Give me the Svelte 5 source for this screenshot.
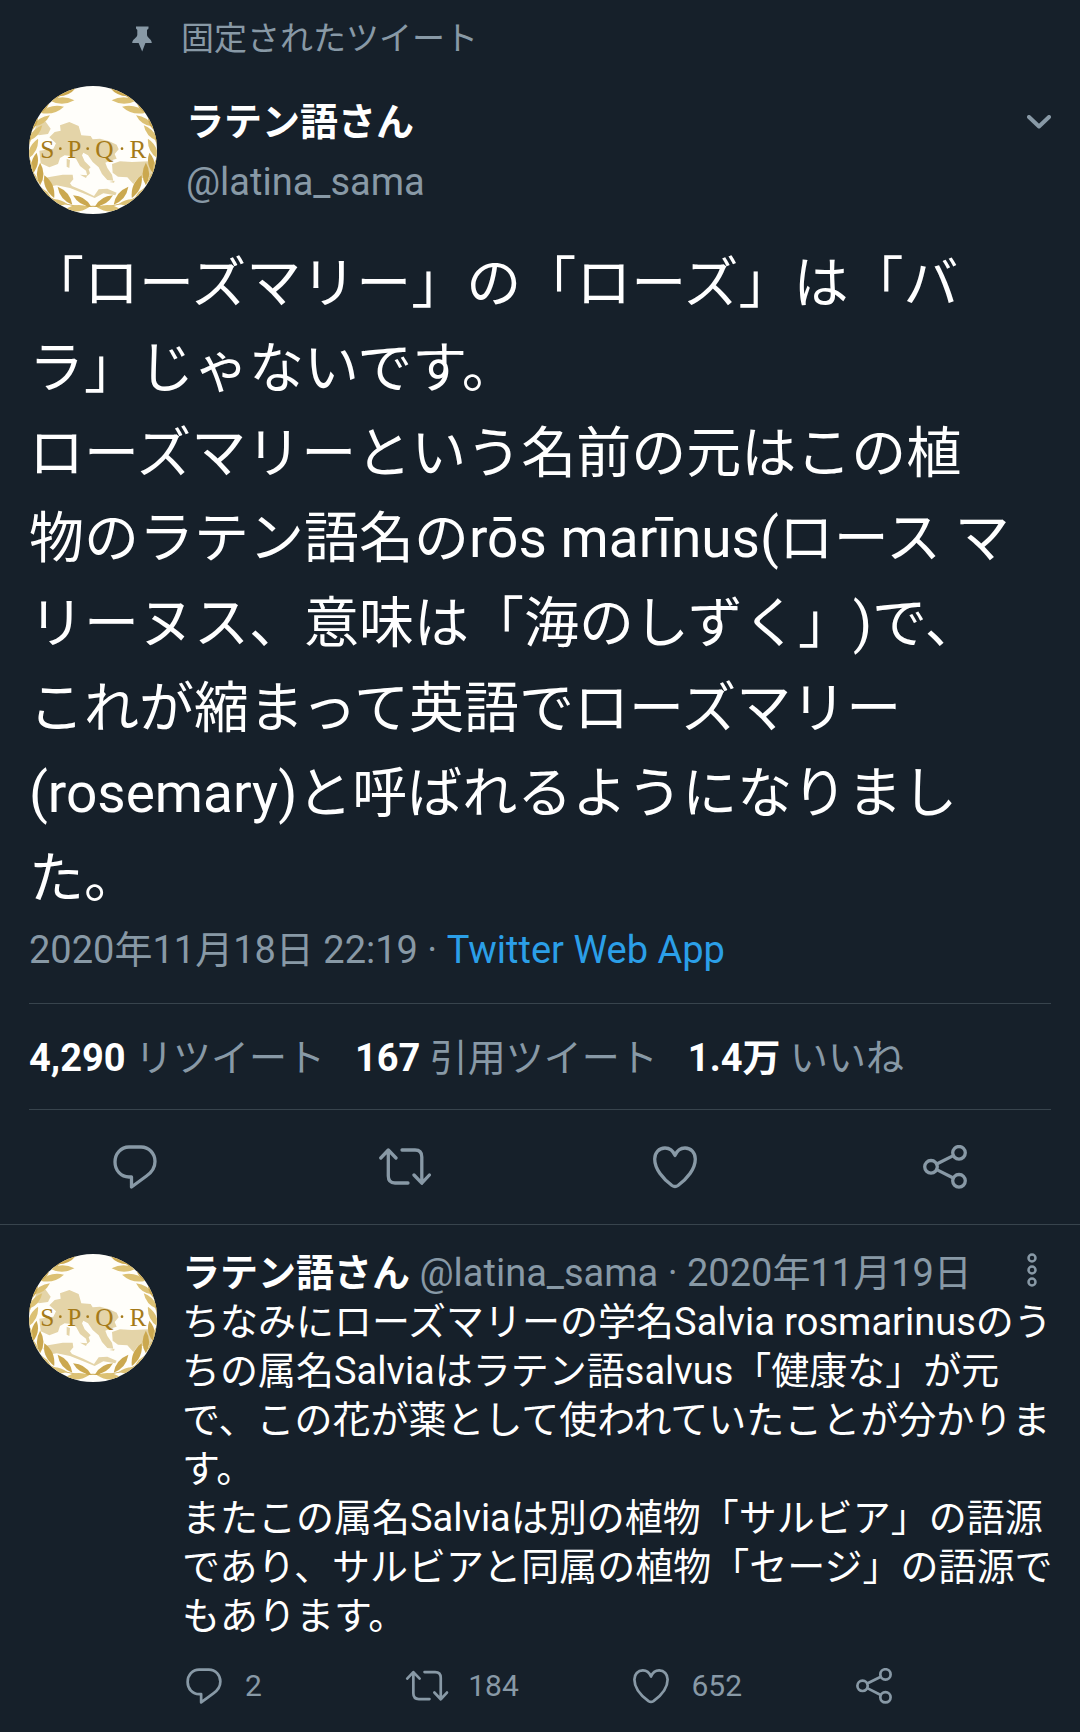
<script lang="ts">
	interface Stat { value: string; label: string }
	interface Action { icon: string; label: string; count?: string }

	const user = { name: 'ラテン語さん', handle: '@latina_sama' };

	const paragraphs = [
		'「ローズマリー」の「ローズ」は「バラ」じゃないです。',
		'ローズマリーという名前の元はこの植物のラテン語名のrōs marīnus(ロース マリーヌス、意味は「海のしずく」)で、これが縮まって英語でローズマリー(rosemary)と呼ばれるようになりました。'
	];

	const replyParagraphs = [
		'ちなみにローズマリーの学名Salvia rosmarinusのうちの属名Salviaはラテン語salvus「健康な」が元で、この花が薬として使われていたことが分かります。',
		'またこの属名Salviaは別の植物「サルビア」の語源であり、サルビアと同属の植物「セージ」の語源でもあります。'
	];

	const stats: Stat[] = [
		{ value: '4,290', label: 'リツイート' },
		{ value: '167', label: '引用ツイート' },
		{ value: '1.4万', label: 'いいね' }
	];

	const actions: Action[] = [
		{ icon: 'reply', label: '返信' },
		{ icon: 'retweet', label: 'リツイート' },
		{ icon: 'like', label: 'いいね' },
		{ icon: 'share', label: '共有' }
	];

	const counts = ['2', '184', '652'];
	const replyActions: Action[] = actions.map((a, i) => ({ ...a, count: counts[i] }));

	// laurel leaves of one branch: base x, base y, tip x, tip y
	const leaves = [
		[112, 48, 170, 24], [96, 62, 166, 61], [92, 60, 138, 32], [68, 98, 136, 80],
		[66, 100, 96, 60], [48, 140, 96, 106], [46, 150, 60, 100], [34, 184, 74, 136],
		[34, 200, 34, 144], [34, 236, 62, 176], [46, 282, 58, 218], [46, 282, 26, 222],
		[68, 316, 68, 248], [64, 318, 30, 262], [108, 354, 80, 286], [98, 350, 44, 316],
		[160, 374, 118, 320], [146, 372, 84, 362], [214, 380, 162, 346], [208, 382, 140, 388]
	];

	function leafPath([x1, y1, x2, y2]: number[]) {
		const mx = (x1 + x2) / 2;
		const my = (y1 + y2) / 2;
		const nx = (y1 - y2) * 0.28;
		const ny = (x2 - x1) * 0.28;
		return `M${x1} ${y1}Q${mx + nx} ${my + ny} ${x2} ${y2}Q${mx - nx} ${my - ny} ${x1} ${y1}Z`;
	}
</script>

{#snippet branch()}
	<path class="stem" d="M44 150C22 210 34 290 76 336C116 374 168 382 219 379" />
	{#each leaves as leaf, i}
		<path d={leafPath(leaf)} class:dark={i % 2 === 0} />
	{/each}
{/snippet}

{#snippet avatar()}
	<a class="avatar" href="#profile" aria-label={user.name}>
		<svg viewBox="27 18 384 384" aria-hidden="true">
			<rect x="27" y="18" width="384" height="384" fill="#fffefa" />
			<g class="map">
				<path d="M52 128L76 124L92 146L84 162L56 166L44 150Z" />
				<path d="M88 172L104 156L122 152L120 136L148 126L176 138L184 166L212 168L218 178L240 176L268 184L290 194L296 208L284 222L290 236L270 242L256 248L262 264L276 284L280 302L262 300L246 282L236 262L218 246L204 226L190 218L186 226L194 244L212 262L206 268L210 280L202 288L198 272L180 258L168 236L152 228L134 226L120 234L114 252L88 262L62 250L58 212L100 206L108 190Z" />
				<path d="M140 236L150 240L148 264L140 260ZM180 284L202 286L198 294ZM268 306L284 302L282 308Z" />
				<path d="M276 252L300 244L336 246L388 244L398 290L352 296L340 312L322 292L294 290L278 278Z" />
				<path d="M70 300L84 292L128 284L158 284L160 298L150 310L156 318L190 332L222 348L236 328L262 326L290 338L286 346L250 340L224 354L186 338L150 324L110 316L76 322Z" />
			</g>
			<g class="laurel" transform="translate(-11 0) scale(1.05 1)">{@render branch()}</g>
			<g class="laurel" transform="translate(449 0) scale(-1.05 1)">{@render branch()}</g>
			<g class="spqr">
				<text x="82" y="233">S</text>
				<text x="163" y="233">P</text>
				<text x="253" y="233">Q</text>
				<text x="354" y="233">R</text>
			</g>
			<g fill="#a57a18">
				<circle cx="121" cy="206" r="4" />
				<circle cx="203" cy="206" r="4" />
				<circle cx="306" cy="206" r="4" />
			</g>
		</svg>
	</a>
{/snippet}

{#snippet icon(name: string)}
	{#if name === 'retweet'}
		<svg class="icon" viewBox="0 0 52 44" aria-hidden="true">
			<path d="M1.8 13L9.3 5L17 13M9.3 5.5V31Q9.3 38 16 38H29" />
			<path d="M23 5H36Q42.8 5 42.8 12V37.5M35 30L42.8 38.2L50.4 30" />
		</svg>
	{:else}
		<svg class="icon" viewBox="-4 0 52 44" aria-hidden="true">
			{#if name === 'reply'}
				<path d="M16 2H28C36 2 42 8.5 42 16.5C42 23 38.5 27.5 33.5 31L18.5 42V32H16C8 32 2 25.5 2 17C2 8.5 8 2 16 2Z" />
			{:else if name === 'like'}
				<path d="M22 10.5C20 5.5 16 3 12 3C6 3 1.7 7.5 1.7 14C1.7 24 10 34 19 40.5Q22 42.5 25 40.5C34 34 42.3 24 42.3 14C42.3 7.5 38 3 32 3C28 3 24 5.5 22 10.5Z" />
			{:else}
				<circle cx="8" cy="21.8" r="6.3" />
				<circle cx="36" cy="7.8" r="6.3" />
				<circle cx="36" cy="35.8" r="6.3" />
				<path d="M13.7 19L30.3 10.6M13.7 24.6L30.3 33" />
			{/if}
		</svg>
	{/if}
{/snippet}

<main>
	<article class="tweet">
		<div class="pinned">
			<svg class="pin" viewBox="0 0 20 26" aria-hidden="true">
				<path d="M4 .5H16.5V2.5L15 4V9C15.3 12 19.8 13 19.8 17H13.4L10.2 25.5L6.6 17H.2C.2 13 5 12 5.3 9V4L4 2.5Z" />
			</svg>
			<span>固定されたツイート</span>
		</div>

		<header class="author">
			{@render avatar()}
			<div class="who">
				<strong>{user.name}</strong>
				<span class="muted">{user.handle}</span>
			</div>
			<button class="chevron" aria-label="メニュー">
				<svg viewBox="0 0 24 14" aria-hidden="true"><path d="M2 2L12 11.5L22 2" /></svg>
			</button>
		</header>

		<div class="text">
			{#each paragraphs as p}
				<p>{p}</p>
			{/each}
		</div>

		<div class="meta">2020年11月18日 22:19 · <a href="#source">Twitter Web App</a></div>

		<div class="stats">
			{#each stats as s}
				<a href="#stats"><strong>{s.value}</strong> {s.label}</a>
			{/each}
		</div>

		<div class="actions">
			{#each actions as a}
				<button aria-label={a.label}>{@render icon(a.icon)}</button>
			{/each}
		</div>
	</article>

	<article class="reply">
		{@render avatar()}
		<div class="content">
			<header>
				<div class="byline"><strong>{user.name}</strong> {user.handle} · 2020年11月19日</div>
				<button class="more" aria-label="その他">
					<svg viewBox="0 0 12 36" aria-hidden="true">
						<circle cx="6" cy="6" r="3.5" />
						<circle cx="6" cy="18" r="3.5" />
						<circle cx="6" cy="30" r="3.5" />
					</svg>
				</button>
			</header>
			{#each replyParagraphs as p}
				<p>{p}</p>
			{/each}
			<div class="reply-actions">
				{#each replyActions as a}
					<button aria-label={a.label}>{@render icon(a.icon)}{#if a.count}<span>{a.count}</span>{/if}</button>
				{/each}
			</div>
		</div>
	</article>
</main>

<style>
	:global(body) { background: #16202a; }
	main {
		color: #fff;
		font-family: Roboto, 'Noto Sans CJK JP', sans-serif;
		font-size: 38px;
		line-height: 48px;
		text-spacing-trim: space-all;
	}
	p { margin: 0; }
	strong { color: #fff; font-weight: 700; }
	button {
		background: none;
		border: none;
		padding: 0;
		color: #8899a6;
		font: inherit;
		cursor: pointer;
	}
	.muted { color: #8899a6; }

	.tweet { border-bottom: 1px solid #38444d; padding-top: 19px; }
	.pinned {
		display: flex;
		align-items: center;
		gap: 29px;
		padding-left: 132px;
		color: #8899a6;
		font-size: 33px;
		line-height: 40px;
	}
	.pin { width: 20px; height: 26px; fill: currentColor; }

	.author { display: flex; gap: 29px; padding: 27px 29px 0; }
	.avatar { flex: none; width: 128px; height: 128px; border-radius: 50%; overflow: hidden; }
	.avatar svg { display: block; width: 100%; height: 100%; }
	.map { fill: #e4d4a8; }
	.laurel { fill: #dcc174; }
	.laurel .dark { fill: #cba84f; }
	.laurel .stem { fill: none; stroke: #cba84f; stroke-width: 3; }
	.spqr { fill: #a57a18; font-family: 'Liberation Serif', serif; font-size: 76px; text-anchor: middle; }
	.who { flex: 1; display: flex; flex-direction: column; gap: 12px; padding-top: 12px; }
	.chevron { align-self: flex-start; padding-top: 29px; }
	.chevron svg {
		display: block;
		width: 24px;
		height: 14px;
		fill: none;
		stroke: currentColor;
		stroke-width: 4;
		stroke-linecap: round;
		stroke-linejoin: round;
	}

	.text { padding: 27px 68px 0 29px; font-size: 55px; line-height: 85px; }
	.meta { margin: 0 29px; padding: 5px 0 29px; color: #8899a6; border-bottom: 1px solid #38444d; }
	.meta a { color: #2b9fe8; text-decoration: none; }
	.stats {
		display: flex;
		gap: 30px;
		margin: 0 29px;
		padding: 30px 0 27px;
		border-bottom: 1px solid #38444d;
	}
	.stats a { color: #8899a6; text-decoration: none; }

	.icon {
		flex: none;
		width: 52px;
		height: 44px;
		fill: none;
		stroke: currentColor;
		stroke-width: 3.3;
		stroke-linecap: round;
		stroke-linejoin: round;
	}
	.actions { display: grid; grid-template-columns: repeat(4, 1fr); padding: 35px 0; }
	.actions button { display: flex; justify-content: center; }

	.reply { display: flex; gap: 25px; padding: 0 5px 0 29px; }
	.reply .avatar { margin-top: 29px; }
	.content { flex: 1; min-width: 0; padding-top: 24px; line-height: 49px; }
	.content header { display: flex; justify-content: space-between; padding-right: 37px; }
	.content p { padding-right: 14px; }
	.byline { color: #8899a6; }
	.more { align-self: flex-start; padding-top: 3px; }
	.more svg { display: block; width: 12px; height: 36px; fill: none; stroke: currentColor; stroke-width: 2.5; }
	.reply-actions { display: grid; grid-template-columns: repeat(4, 1fr); padding: 23px 0 22px; }
	.reply-actions button { display: flex; align-items: center; gap: 19px; font-size: 30px; line-height: 44px; }
	.reply-actions .icon { width: 44px; height: 36px; }
</style>
